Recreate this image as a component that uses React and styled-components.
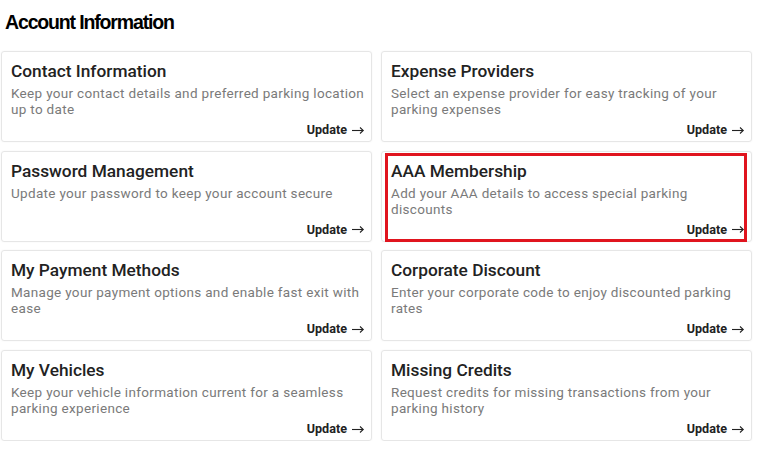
import React from "react";
import styled, { createGlobalStyle } from "styled-components";

const Global = createGlobalStyle`
  html, body { margin: 0; padding: 0; background: #fff; }
  body { font-family: Roboto, "Liberation Sans", Arial, sans-serif; }
`;

const Page = styled.div`
  width: 764px;
  padding: 10px 12px 0 1px;
  box-sizing: border-box;
`;

const Heading = styled.h1`
  margin: 0 0 16px 4px;
  font-family: "Liberation Sans", Arial, sans-serif;
  font-weight: 700;
  font-size: 19.5px;
  line-height: 25px;
  letter-spacing: -1.15px;
  color: #000;
`;

const Grid = styled.div`
  display: grid;
  grid-template-columns: 371px 371px;
  grid-auto-rows: 91px;
  column-gap: 9px;
  row-gap: 8.7px;
`;

const Card = styled.div`
  position: relative;
  box-sizing: border-box;
  border: 1px solid #e6e6e6;
  border-radius: 3px;
  box-shadow: 0 0 2px rgba(0, 0, 0, 0.05);
  padding: 9px 7px 4px 9px;
  display: flex;
  flex-direction: column;
`;

const Highlight = styled.div`
  position: absolute;
  left: 3px;
  right: 4px;
  top: 1px;
  bottom: -1px;
  border: 3px solid #e0141e;
  pointer-events: none;
`;

const Title = styled.div`
  font-family: Roboto, Arial, sans-serif;
  font-weight: 500;
  font-size: 17.3px;
  line-height: 21px;
  color: #222;
`;

const Desc = styled.div`
  font-family: Roboto, Arial, sans-serif;
  font-size: 13.5px;
  line-height: 16px;
  letter-spacing: 0.32px;
  color: #7a7a7a;
  margin-top: 3px;
  margin-right: -4px;
`;

const Action = styled.div`
  margin-top: auto;
  align-self: flex-end;
  display: flex;
  align-items: center;
  gap: 5px;
  font-family: Roboto, Arial, sans-serif;
  font-weight: 700;
  font-size: 12.6px;
  line-height: 15px;
  color: #222;
`;

const ArrowIcon = () => (
  <svg width="12" height="8" viewBox="0 0 12 8" fill="none" stroke="#222" strokeWidth="1.1">
    <path d="M0 4.5H11.2" />
    <path d="M8 1.5L11.3 4.5L8 7.5" />
  </svg>
);

const items = [
  ["Contact Information", "Keep your contact details and preferred parking location up to date"],
  ["Expense Providers", "Select an expense provider for easy tracking of your parking expenses"],
  ["Password Management", "Update your password to keep your account secure"],
  ["AAA Membership", "Add your AAA details to access special parking discounts", true],
  ["My Payment Methods", "Manage your payment options and enable fast exit with ease"],
  ["Corporate Discount", "Enter your corporate code to enjoy discounted parking rates"],
  ["My Vehicles", "Keep your vehicle information current for a seamless parking experience"],
  ["Missing Credits", "Request credits for missing transactions from your parking history"],
];

export default function App() {
  return (
    <Page>
      <Global />
      <Heading>Account Information</Heading>
      <Grid>
        {items.map(([t, d, hl]) => (
          <Card key={t}>
            {hl && <Highlight />}
            <Title>{t}</Title>
            <Desc>{d}</Desc>
            <Action>
              Update
              <ArrowIcon />
            </Action>
          </Card>
        ))}
      </Grid>
    </Page>
  );
}
